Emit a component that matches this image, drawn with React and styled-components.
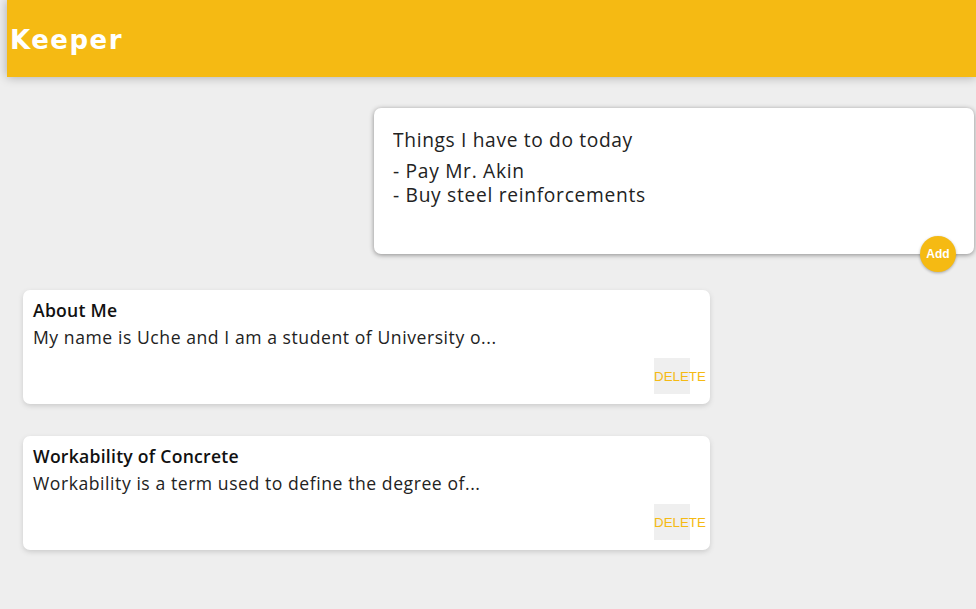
import React from 'react';
import styled, { createGlobalStyle } from 'styled-components';

const GlobalStyle = createGlobalStyle`
  html, body {
    margin: 0;
    padding: 0;
    background: #eee;
    font-family: 'Open Sans', 'Liberation Sans', sans-serif;
  }
  * {
    box-sizing: border-box;
  }
`;

const notes = [
  {
    title: 'About Me',
    content: 'My name is Uche and I am a student of University o...',
  },
  {
    title: 'Workability of Concrete',
    content: 'Workability is a term used to define the degree of...',
  },
];

const App = () => {
  return (
    <Page>
      <GlobalStyle />
      <Header>
        <h1>Keeper</h1>
      </Header>
      <CreateArea>
        <CreateForm onSubmit={(e) => e.preventDefault()}>
          <TitleInput name='title' defaultValue='Things I have to do today' />
          <ContentInput
            name='content'
            rows={3}
            defaultValue={'- Pay Mr. Akin\n- Buy steel reinforcements'}
          />
          <AddButton type='submit'>Add</AddButton>
        </CreateForm>
      </CreateArea>
      <NoteList>
        {notes.map((note, index) => (
          <Note key={index}>
            <h1>{note.title}</h1>
            <p>{note.content}</p>
            <NoteFooter>
              <DeleteButton>DELETE</DeleteButton>
            </NoteFooter>
          </Note>
        ))}
      </NoteList>
    </Page>
  );
};

const Page = styled.div`
  min-height: 609px;
  padding-bottom: 40px;
`;

const Header = styled.header`
  background-color: #f5ba13;
  margin-left: 7px;
  height: 77px;
  padding: 2px 0 0 3px;
  display: flex;
  align-items: center;
  box-shadow: 0 0 10px 0 rgba(0, 0, 0, 0.3);

  h1 {
    margin: 0;
    color: #fff;
    font-family: 'DejaVu Sans', 'Liberation Sans', sans-serif;
    font-weight: 700;
    font-size: 26px;
    letter-spacing: 1.5px;
    line-height: 1;
  }
`;

const CreateArea = styled.div`
  display: flex;
  justify-content: flex-end;
  padding: 31px 2px 0 0;
`;

const CreateForm = styled.form`
  position: relative;
  width: 600px;
  background: #fff;
  padding: 15px;
  border-radius: 7px;
  box-shadow: 0 1px 5px rgb(138, 137, 137);
  display: flex;
  flex-direction: column;
`;

const TitleInput = styled.input`
  width: 100%;
  height: 32px;
  border: none;
  padding: 4px;
  outline: none;
  font-size: 19.2px;
  letter-spacing: 0.65px;
  font-family: inherit;
  color: #222;
`;

const ContentInput = styled.textarea`
  width: 100%;
  height: 84px;
  border: none;
  padding: 4px;
  outline: none;
  font-size: 19.2px;
  line-height: 24px;
  letter-spacing: 0.7px;
  font-family: inherit;
  color: #222;
  resize: none;
`;

const AddButton = styled.button`
  position: absolute;
  right: 18px;
  bottom: -18px;
  background: #f5ba13;
  color: #fff;
  border: none;
  border-radius: 50%;
  width: 36px;
  height: 36px;
  padding: 0;
  box-shadow: 0 1px 3px rgba(0, 0, 0, 0.3);
  font-family: 'Liberation Sans', Arial, sans-serif;
  font-weight: 700;
  font-size: 12px;
  cursor: pointer;
`;

const NoteList = styled.div`
  display: flex;
  flex-direction: column;
  gap: 32px;
  padding: 36px 0 0 23px;
`;

const Note = styled.div`
  width: 687px;
  background: #fff;
  border-radius: 7px;
  box-shadow: 0 2px 5px #ccc;
  padding: 10px;

  h1 {
    margin: 0 0 6px;
    font-size: 17.6px;
    line-height: 21px;
    font-weight: 600;
    letter-spacing: 0.25px;
    color: #111;
  }
  p {
    margin: 0 0 10px;
    font-size: 17.6px;
    line-height: 21px;
    letter-spacing: 0.55px;
    color: #222;
    white-space: pre-wrap;
  }
`;

const NoteFooter = styled.div`
  display: flex;
  justify-content: flex-end;
  padding-right: 10px;
`;

const DeleteButton = styled.button`
  width: 36px;
  height: 36px;
  padding: 0;
  border: none;
  background: #efefef;
  color: #f5ba13;
  font-family: 'Liberation Sans', Arial, sans-serif;
  font-size: 13.33px;
  text-align: left;
  white-space: nowrap;
  overflow: visible;
  cursor: pointer;
`;

export default App;
